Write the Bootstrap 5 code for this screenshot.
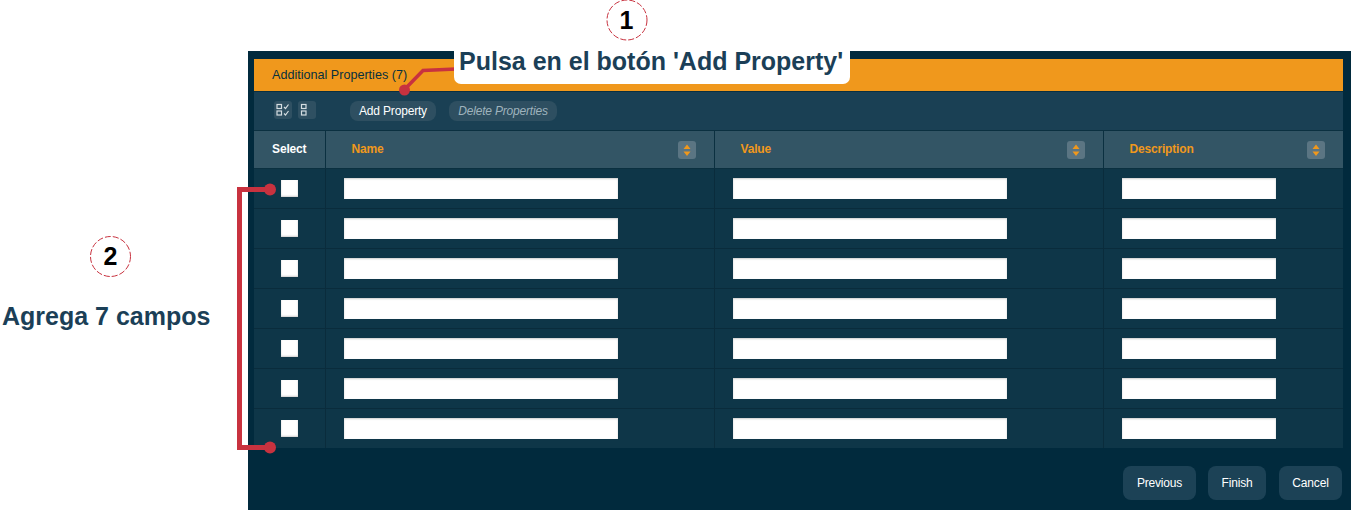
<!DOCTYPE html>
<html lang="en">
<head>
  <meta charset="UTF-8" />
  <meta name="viewport" content="width=device-width, initial-scale=1" />
  <title>Additional Properties</title>
  <link href="https://cdn.jsdelivr.net/npm/bootstrap@5.3.0/dist/css/bootstrap.min.css" rel="stylesheet" />
  <style>
    html, body { height: 510px; overflow: hidden; }
    body { font-family: "Liberation Sans", Arial, sans-serif; font-size: 12px; letter-spacing: -.18px; background: #fff; position: relative; }
    .step-aside { width: 248px; flex: none; padding-top: 236px; letter-spacing: 0; }
    .step-num { width: 41px; height: 41px; font-size: 25px; font-weight: 700; color: #000; line-height: 1; letter-spacing: 0; }
    .step-two { margin-left: 90px; }
    .step-text { margin-top: 25px; margin-left: 2px; font-size: 25px; line-height: 29px; font-weight: 700; color: #1b3f57; white-space: nowrap; }
    .step-one { position: absolute; left: 606px; top: 0; }
    .callout { position: absolute; left: 454px; top: 44px; width: 396px; height: 40px; padding-left: 5px; background: #fff; border-radius: 0 0 7px 7px; font-size: 25px; line-height: 35px; font-weight: 700; color: #1b3f57; white-space: nowrap; letter-spacing: 0; }
    .marks { position: absolute; left: 0; top: 0; pointer-events: none; }

    .wrap-main { flex: 1; padding-top: 51px; min-width: 0; }
    .panel-box { height: 459px; background: #012a3d; padding: 8px 8px 0 6px; }
    .title-bar { height: 33px; background: #f0981c; border-bottom: 1px solid #0b3040; padding-left: 18px; font-size: 12.6px; letter-spacing: 0; line-height: 32px; color: #06303f; }
    .tool-bar { height: 38px; background: #1a4054; padding-left: 20px; }
    .ico-btn { width: 18px; height: 18px; margin-bottom: 2px; background: #2f5062; border-radius: 3px; }
    .ico-gap { margin-left: 6px; }
    .ico-btn svg { display: block; }
    .pill { height: 20px; background: #2e4f61; border-radius: 8px; line-height: 20px; text-align: center; }
    .pill-add { width: 86px; margin-left: 34px; color: #fff; }
    .pill-del { width: 108px; margin-left: 13px; color: #9fb3bd; font-style: italic; }

    .prop-table { table-layout: fixed; width: 1089px; border-collapse: collapse; margin: 0; --bs-table-bg: #0e3648; --bs-table-color: #fff; }
    .prop-table th, .prop-table td { padding: 0; border: 0; }
    .prop-table th { height: 38px; background: #335565; border-top: 1px solid #0b3040; border-bottom: 1px solid #0b3040; border-left: 1px solid #0b3040; font-size: 12px; font-weight: 700; vertical-align: middle; }
    .prop-table th:first-child, .prop-table td:first-child { border-left: 0; }
    .prop-table td { height: 40px; background: #0e3648; border-bottom: 1px solid #0a2c3c; border-left: 1px solid #0a2c3c; vertical-align: middle; }
    .prop-table tr:last-child td { border-bottom: 0; height: 39px; }
    .head-in { padding: 0 18px 0 26px; color: #f0981c; }
    .head-in span, .head-select { padding-bottom: 2px; }
    .sort-btn { width: 18px; height: 18px; background: #5b7583; border-radius: 3px; }
    .sort-btn svg { display: block; }
    .field-input.form-control { width: 274px; height: 21px; min-height: 0; margin-left: 18px; padding: 0; border: 0; border-radius: 0; background: #fff; box-shadow: inset 0 1px 2px rgba(0,0,0,.2); }
    .field-input.field-short.form-control { width: 154px; }
    .pick-box.form-check-input { display: block; width: 17px; height: 17px; margin: 0 auto; border: 0; border-radius: 0; background-color: #fff; box-shadow: inset 0 -1px 2px rgba(0,0,0,.2); float: none; }

    .foot-bar { padding: 18px 1px 0 0; }
    .foot-btn.btn { height: 34px; padding: 0; background: #1c4256; border: 0; border-radius: 8px; color: #fff; font-size: 12px; letter-spacing: -.18px; line-height: 34px; }
    .btn-prev { width: 73px; }
    .btn-finish { width: 58px; margin-left: 12px; }
    .btn-cancel { width: 63px; margin-left: 13px; }
  </style>
</head>
<body>
  <div class="d-flex">
    <aside class="step-aside d-flex flex-column align-items-start">
      <div class="step-num step-two d-flex align-items-center justify-content-center">2</div>
      <div class="step-text">Agrega 7 campos</div>
    </aside>

    <main class="wrap-main">
      <div class="panel-box">
        <div class="title-bar">Additional Properties (7)</div>
        <div class="tool-bar d-flex align-items-center">
          <div class="ico-btn">
            <svg width="18" height="18" viewBox="0 0 18 18" fill="none" stroke="#d5dde1" stroke-width="1.2">
              <rect x="3" y="3.5" width="4.5" height="4" />
              <rect x="3" y="10" width="4.5" height="4" />
              <path d="M10 6l1.500 1.500L14.500 3.500M10 12.500l1.500 1.500 3-4" />
            </svg>
          </div>
          <div class="ico-btn ico-gap">
            <svg width="18" height="18" viewBox="0 0 18 18" fill="none" stroke="#d5dde1" stroke-width="1.2">
              <rect x="3.5" y="3.5" width="4.5" height="4" />
              <rect x="3.5" y="10" width="4.5" height="4" />
            </svg>
          </div>
          <div class="pill pill-add">Add Property</div>
          <div class="pill pill-del">Delete Properties</div>
        </div>

        <table class="table prop-table">
          <colgroup>
            <col style="width: 71px" />
            <col style="width: 389px" />
            <col style="width: 389px" />
            <col style="width: 240px" />
          </colgroup>
          <thead id="propHead"></thead>
          <tbody id="propBody"></tbody>
        </table>

        <div class="foot-bar d-flex justify-content-end">
          <button type="button" class="btn foot-btn btn-prev">Previous</button>
          <button type="button" class="btn foot-btn btn-finish">Finish</button>
          <button type="button" class="btn foot-btn btn-cancel">Cancel</button>
        </div>
      </div>
    </main>
  </div>

  <div class="step-num step-one d-flex align-items-center justify-content-center">1</div>

  <svg class="marks" width="1351" height="510" viewBox="0 0 1351 510" fill="none">
    <circle cx="627" cy="20" r="20" stroke="#c8323f" stroke-dasharray="6 2" />
    <circle cx="110.500" cy="256.500" r="20" stroke="#c8323f" stroke-dasharray="6 2" />
    <path d="M404 90L423 70.500L456 69" stroke="#c8323f" stroke-width="3.500" />
    <circle cx="404.500" cy="90" r="5.500" fill="#c8323f" />
    <path d="M270 189.500H239.500V447.500H270" stroke="#c8323f" stroke-width="5" />
    <circle cx="270" cy="189.500" r="6" fill="#c8323f" />
    <circle cx="270" cy="447.500" r="6" fill="#c8323f" />
  </svg>

  <div class="callout">Pulsa en el botón 'Add Property'</div>

  <script>
    const sortIcon = '<div class="sort-btn"><svg width="18" height="18" viewBox="0 0 18 18" fill="#f0981c"><path d="M9 3.500l3.500 4.500h-7zM9 15l-3.500-4.500h7z" /></svg></div>';
    const head = ['Name', 'Value', 'Description'].map(name =>
      '<th><div class="head-in d-flex align-items-center justify-content-between"><span>' + name + '</span>' + sortIcon + '</div></th>'
    ).join('');
    document.getElementById('propHead').innerHTML = '<tr><th class="text-center text-white"><div class="head-select">Select</div></th>' + head + '</tr>';

    let rows = '';
    for (let i = 0; i < 7; i++) {
      rows += '<tr>' +
        '<td><input class="form-check-input pick-box" type="checkbox" aria-label="Select" /></td>' +
        '<td><input class="form-control field-input" type="text" aria-label="Name" /></td>' +
        '<td><input class="form-control field-input" type="text" aria-label="Value" /></td>' +
        '<td><input class="form-control field-input field-short" type="text" aria-label="Description" /></td>' +
        '</tr>';
    }
    document.getElementById('propBody').innerHTML = rows;
  </script>
  <script src="https://cdn.jsdelivr.net/npm/bootstrap@5.3.0/dist/js/bootstrap.bundle.min.js"></script>
</body>
</html>
